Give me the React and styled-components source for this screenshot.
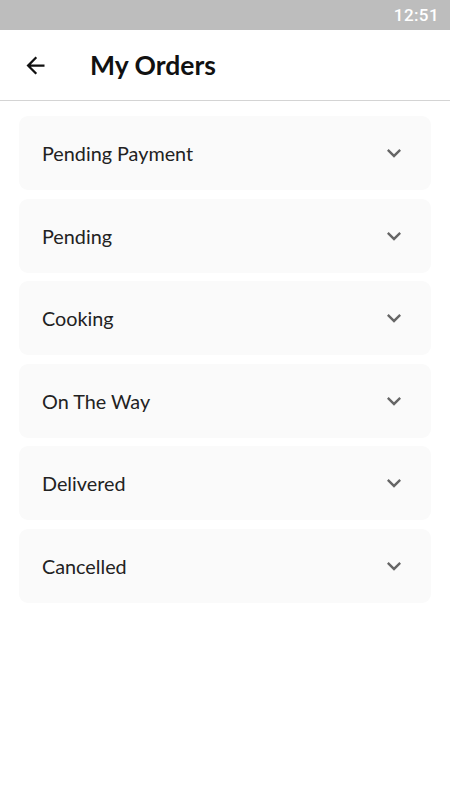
import React from "react";
import styled, { createGlobalStyle } from "styled-components";

const GlobalStyle = createGlobalStyle`
  html, body {
    margin: 0;
    padding: 0;
    background: #fff;
  }
  body {
    font-family: Lato, "Noto Sans", sans-serif;
  }
`;

const Screen = styled.div`
  width: 450px;
  min-height: 800px;
  background: #fff;
  display: flex;
  flex-direction: column;
`;

const StatusBar = styled.div`
  height: 30px;
  background: #bdbdbd;
  display: flex;
  align-items: center;
  justify-content: flex-end;
  padding: 0 11px;
  color: #fff;
  font-family: Roboto, sans-serif;
  font-weight: 500;
  font-size: 17px;
  letter-spacing: 0.4px;
`;

const Header = styled.div`
  height: 70px;
  display: flex;
  align-items: center;
  border-bottom: 1.5px solid #d4d4d4;
  padding-left: 21px;
`;

const BackButton = styled.button`
  border: 0;
  background: none;
  padding: 0;
  width: 28px;
  height: 28px;
  display: flex;
  align-items: center;
  justify-content: center;
  color: #111;
  margin-right: 41px;
`;

const Title = styled.h1`
  margin: 0;
  font-family: Lato, sans-serif;
  font-weight: 700;
  font-size: 26.5px;
  color: #111;
`;

const List = styled.div`
  display: flex;
  flex-direction: column;
  gap: 8.5px;
  padding: 15px 19px;
`;

const Card = styled.div`
  height: 74px;
  border-radius: 9px;
  background: #fafafa;
  display: flex;
  align-items: center;
  justify-content: space-between;
  padding: 0 23px 0 23px;
`;

const Label = styled.span`
  font-family: Lato, sans-serif;
  font-size: 19.8px;
  color: #222;
`;

const Chevron = () => (
  <svg width="28" height="28" viewBox="0 0 24 24" fill="#666">
    <path d="M16.59 8.59L12 13.17 7.41 8.59 6 10l6 6 6-6z" />
  </svg>
);

const ArrowBack = () => (
  <svg width="27" height="27" viewBox="0 0 24 24" fill="#111">
    <path d="M20 11H7.83l5.59-5.59L12 4l-8 8 8 8 1.41-1.41L7.83 13H20v-2z" />
  </svg>
);

const statuses = [
  "Pending Payment",
  "Pending",
  "Cooking",
  "On The Way",
  "Delivered",
  "Cancelled",
];

export default function App() {
  return (
    <>
      <GlobalStyle />
      <Screen>
        <StatusBar>12:51</StatusBar>
        <Header>
          <BackButton>
            <ArrowBack />
          </BackButton>
          <Title>My Orders</Title>
        </Header>
        <List>
          {statuses.map((s) => (
            <Card key={s}>
              <Label>{s}</Label>
              <Chevron />
            </Card>
          ))}
        </List>
      </Screen>
    </>
  );
}
